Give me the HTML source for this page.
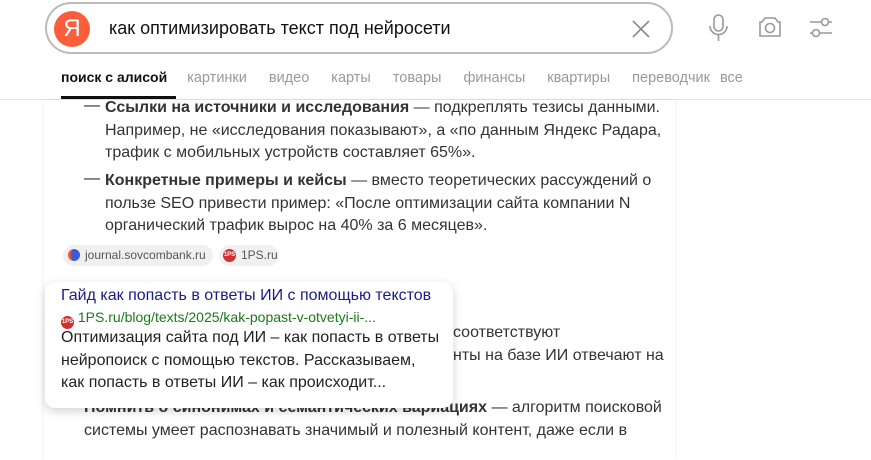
<!DOCTYPE html>
<html><head><meta charset="utf-8"><style>
*{margin:0;padding:0;box-sizing:border-box}
body{width:871px;height:439px;overflow:hidden;background:#fff;font-family:"Liberation Sans","Noto Sans CJK SC",sans-serif;position:relative;color:#222}
.search{position:absolute;left:45px;top:2px;width:628px;height:52px;border:2px solid #bbb;border-radius:26px;background:#fff}
.logo{position:absolute;left:7px;top:7px;width:36px;height:36px;border-radius:50%;background:#fc5e3b;color:#fff;font-size:24px;text-align:center;line-height:36px}
.q{position:absolute;left:62px;top:14px;font-size:18px;color:#111}
.tabs{position:absolute;top:69px;left:61px;font-size:14.5px;color:#999;white-space:nowrap}
.tabs span{margin-right:22px}
.tabs b{color:#111;margin-right:20px;font-size:14px}
.ul{position:absolute;left:61px;top:96px;width:115px;height:3px;background:#111}
.hr{position:absolute;left:0;top:99px;width:871px;height:1px;background:#e6e6e6}
.card{position:absolute;left:44px;top:100px;width:631px;height:360px;background:#fff;box-shadow:0 0 4px rgba(0,0,0,.08)}
.p{position:absolute;left:105px;font-size:16px;line-height:22.5px;color:#333;width:565px}
.dash{position:absolute;left:84px;font-size:16px;color:#222}
.chip{position:absolute;top:245px;height:21px;border-radius:11px;background:#f0f0f2;font-size:12px;color:#555;line-height:21px;padding-left:22px;padding-right:8px}
.pop{position:absolute;left:45px;top:282px;width:408px;height:126px;background:#fff;border-radius:10px;box-shadow:0 3px 10px rgba(0,0,0,.18)}
.ic{display:inline-block;width:13px;height:13px;border-radius:50%;background:#d32f2f;color:#fff;font-size:6px;text-align:center;line-height:13px;font-weight:bold;vertical-align:-1px}
</style></head><body>
<div class="search"><div class="logo">Я</div><div class="q">как оптимизировать текст под нейросети</div>
<svg style="position:absolute;left:584px;top:15px" width="20" height="20"><path d="M2 2L18 18M18 2L2 18" stroke="#888" stroke-width="1.6"/></svg></div>
<svg style="position:absolute;left:708px;top:14px" width="22" height="28" fill="none" stroke="#999" stroke-width="1.6"><rect x="6" y="1" width="9" height="16" rx="4.5"/><path d="M2 12a8.5 8.5 0 0 0 17 0M10.5 21v6"/></svg>
<svg style="position:absolute;left:757px;top:15px" width="26" height="26" fill="none" stroke="#999" stroke-width="1.6"><path d="M8 3h10l3 4h2v14H3V7h2z"/><circle cx="13" cy="13" r="4.5"/></svg>
<svg style="position:absolute;left:808px;top:15px" width="26" height="26" fill="none" stroke="#999" stroke-width="1.6"><circle cx="17" cy="7" r="3.5"/><path d="M2 7h11M21 7h3"/><circle cx="8" cy="18" r="3.5"/><path d="M2 18h2M12 18h12"/></svg>
<div class="tabs"><b>поиск с алисой</b><span>картинки</span><span>видео</span><span>карты</span><span>товары</span><span>финансы</span><span>квартиры</span><span style="margin-right:10px">переводчик</span><span style="margin:0">все</span></div>
<div class="ul"></div><div class="hr"></div>
<div class="card"></div>
<div class="dash" style="top:97px">—</div>
<div class="p" style="top:97px"><b>Ссылки на источники и исследования</b> — подкреплять тезисы данными. Например, не «исследования показывают», а «по данным Яндекс Радара, трафик с мобильных устройств составляет 65%».</div>
<div class="dash" style="top:170px">—</div>
<div class="p" style="top:170px"><b>Конкретные примеры и кейсы</b> — вместо теоретических рассуждений о пользе SEO привести пример: «После оптимизации сайта компании N органический трафик вырос на 40% за 6 месяцев».</div>
<div class="chip" style="left:63px;width:150px"><span style="position:absolute;left:5px;top:4px;width:12px;height:12px;border-radius:50%;background:#3a5bd9;border-left:3px solid #e53"></span>journal.sovcombank.ru</div>
<div class="chip" style="left:219px;width:60px"><span class="ic" style="position:absolute;left:4px;top:4px">1PS</span>1PS.ru</div>
<div class="p" style="top:322px;left:453px;width:220px">соответствуют<br>нты на базе ИИ отвечают на</div>
<div class="p" style="top:397px;left:84px;width:590px"><b>Помнить о синонимах и семантических вариациях</b> — алгоритм поисковой системы умеет распознавать значимый и полезный контент, даже если в</div>
<div class="pop">
<div style="position:absolute;left:16px;top:5px;font-size:16px;color:#1a1a8c">Гайд как попасть в ответы ИИ с помощью текстов</div>
<div style="position:absolute;left:16px;top:27px;font-size:14px;color:#1a7a1a;white-space:nowrap"><span class="ic">1PS</span> 1PS.ru/blog/texts/2025/kak-popast-v-otvetyi-ii-...</div>
<div style="position:absolute;left:16px;top:45px;font-size:16px;line-height:22.5px;color:#222;width:380px">Оптимизация сайта под ИИ – как попасть в ответы нейропоиск с помощью текстов. Рассказываем, как попасть в ответы ИИ – как происходит...</div>
</div>
</body></html>
